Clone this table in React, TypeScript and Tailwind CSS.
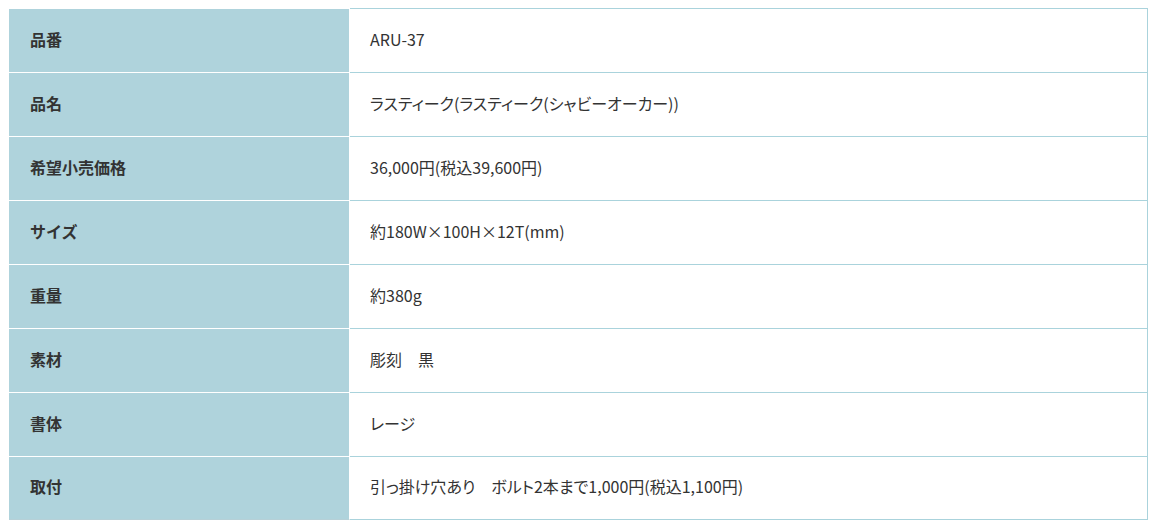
const specs: [string, string][] = [
  ['品番', 'ARU-37'],
  ['品名', 'ラスティーク(ラスティーク(シャビーオーカー))'],
  ['希望小売価格', '36,000円(税込39,600円)'],
  ['サイズ', '約180W×100H×12T(mm)'],
  ['重量', '約380g'],
  ['素材', '彫刻　黒'],
  ['書体', 'レージ'],
  ['取付', '引っ掛け穴あり　ボルト2本まで1,000円(税込1,100円)'],
];

export default function App() {
  return (
    <div
      className="w-[1157px] h-[530px] bg-white pl-[9px] pt-[8px]"
      style={{ fontFamily: '"Noto Sans CJK JP", "Noto Sans", sans-serif' }}
    >
      <div className="w-[1139px] text-[16px] text-[#333]">
        {specs.map(([label, value], i) => {
          const last = i === specs.length - 1;
          return (
            <div key={label} className="flex h-[64px]">
              {/* label cell */}
              <div
                className={`w-[341px] shrink-0 flex items-center bg-[#afd3dc] border-t border-r border-white pl-[21px] pb-[4px] font-bold ${
                  last ? 'border-b border-b-[#b6d0d7]' : ''
                }`}
              >
                {label}
              </div>
              {/* value cell */}
              <div
                className={`flex-1 flex items-center border-t border-r border-[#aad3dc] pl-[20px] pb-[4px] [font-feature-settings:'palt'] ${
                  last ? 'border-b' : ''
                }`}
              >
                {value}
              </div>
            </div>
          );
        })}
      </div>
    </div>
  );
}
